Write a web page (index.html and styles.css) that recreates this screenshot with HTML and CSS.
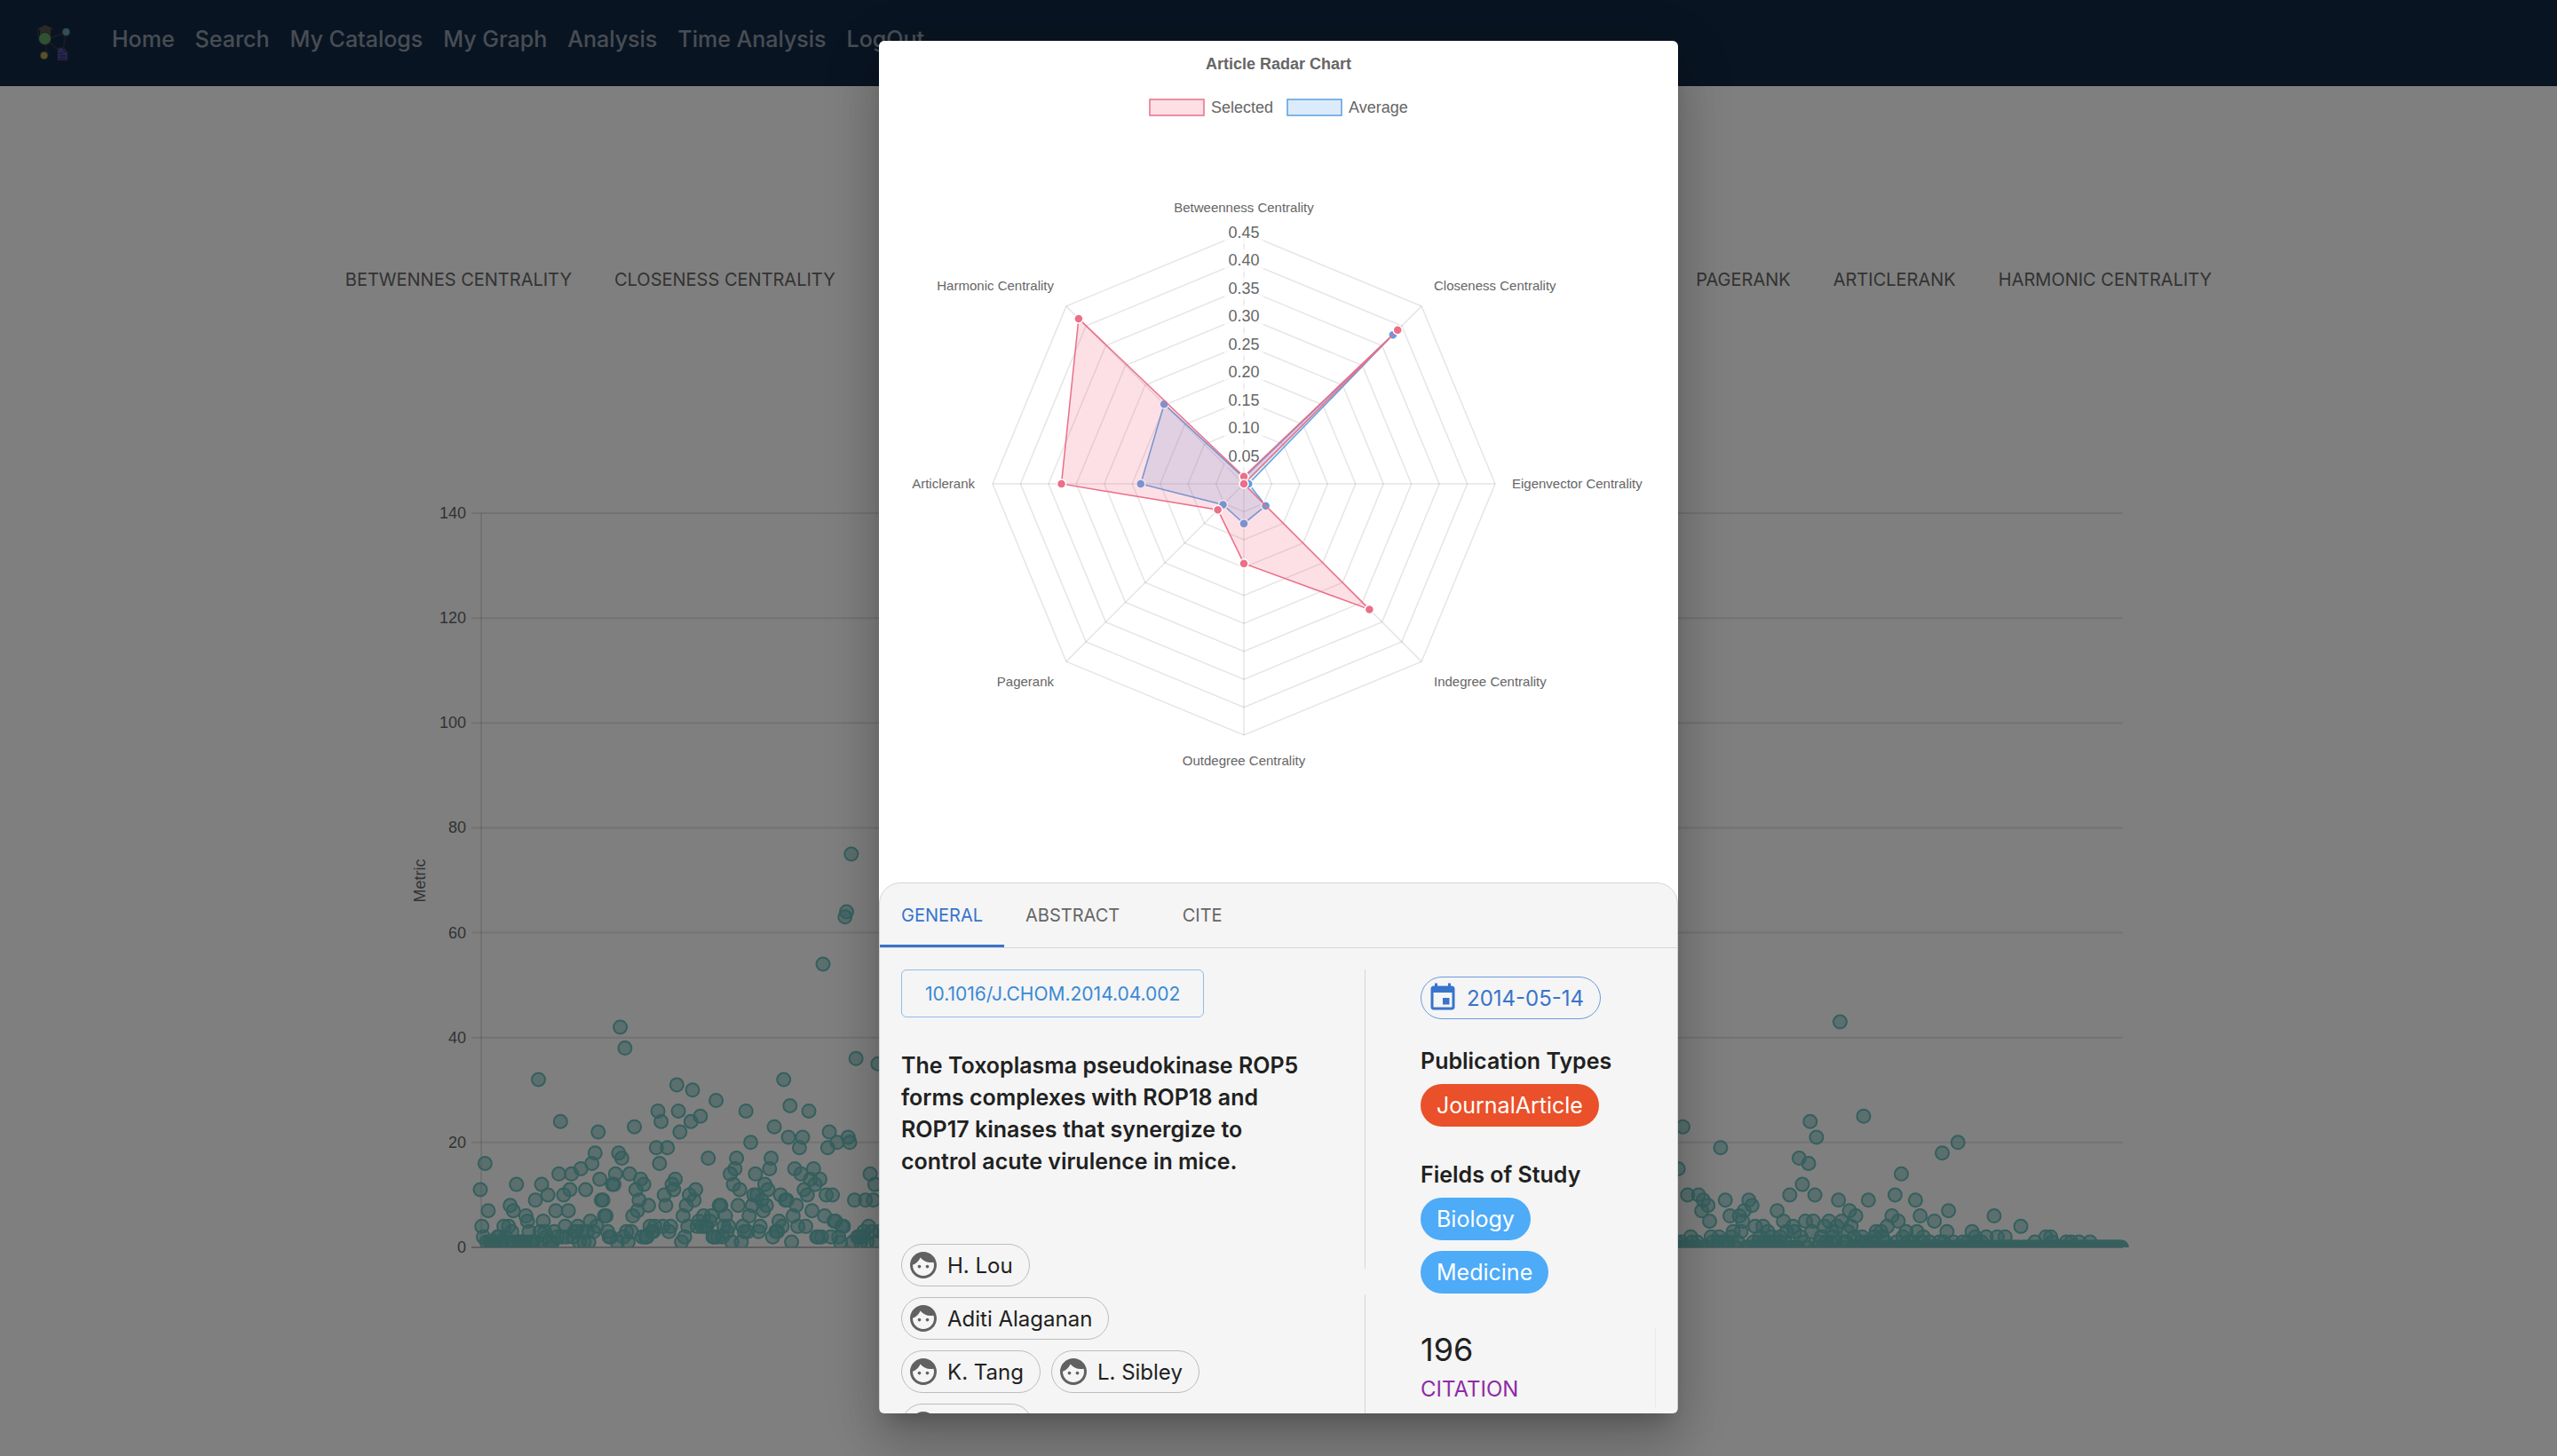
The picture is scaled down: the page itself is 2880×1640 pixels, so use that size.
FILE: index.html
```html
<!DOCTYPE html>
<html lang="en">
<head>
<meta charset="utf-8">
<meta name="viewport" content="width=device-width, initial-scale=1">
<title>Analysis</title>
<link rel="stylesheet" href="styles.css">
</head>
<body>
<header class="navbar">
  <a class="logo" href="#" aria-label="Home page">
    <svg viewBox="0 0 40 42" width="40" height="42">
      <g stroke="#3a3a3a" stroke-width="1.4" fill="none">
        <path d="M12 16 34 9M12 16V35M12 16 30 32M34 9 31 30M3 5V13"/>
      </g>
      <path d="M2 4.500 11 0 20 4.500 11 8Z" fill="#56524f"/>
      <path d="M5 6h12v6H5z" fill="#56524f"/>
      <circle cx="10.500" cy="15.500" r="7" fill="#5fa466" stroke="#3a3a3a"/>
      <circle cx="34.500" cy="8" r="4.500" fill="#659eae" stroke="#3a3a3a"/>
      <circle cx="9.700" cy="34.500" r="4.500" fill="#aba355" stroke="#3a3a3a"/>
      <path d="M25 26h7l4 4v10H25z" fill="#4f4fa8" stroke="#3a3a3a"/>
      <path d="M32 26v4h4M27 32h4M27 35h7M27 38h7" stroke="#25254f" fill="none"/>
    </svg>
  </a>
  <nav class="nav-links">
    <a href="#">Home</a><a href="#">Search</a><a href="#">My Catalogs</a><a href="#">My Graph</a><a href="#">Analysis</a><a href="#">Time Analysis</a><a href="#">LogOut</a>
  </nav>
</header>

<main class="page">
  <div class="metric-tabs">
    <div class="metric-group">
      <button>BETWENNES CENTRALITY</button>
      <button>CLOSENESS CENTRALITY</button>
    </div>
    <div class="metric-group">
      <button>PAGERANK</button>
      <button>ARTICLERANK</button>
      <button>HARMONIC CENTRALITY</button>
    </div>
  </div>
  <svg class="scatter" id="scatter" viewBox="0 0 1960 880" role="img" aria-label="Metric by article"></svg>
</main>

<div class="backdrop">
  <section class="dialog" role="dialog" aria-modal="true" aria-label="Article Radar Chart">
    <svg class="radar" id="radar" viewBox="0 0 900 900"></svg>
    <div class="card">
      <div class="tabs" role="tablist">
        <button class="tab tab-active" role="tab" aria-selected="true">GENERAL</button>
        <button class="tab" role="tab">ABSTRACT</button>
        <button class="tab" role="tab">CITE</button>
      </div>
      <div class="details">
        <div class="main-col">
          <a class="doi" href="#">10.1016/J.CHOM.2014.04.002</a>
          <h2 class="title">The Toxoplasma pseudokinase ROP5 forms complexes with ROP18 and ROP17 kinases that synergize to control acute virulence in mice.</h2>
          <ul class="authors">
            <li class="row"><span class="chip"><svg class="icon" viewBox="0 0 24 24"><use href="#face"/></svg>H. Lou</span></li>
            <li class="row"><span class="chip"><svg class="icon" viewBox="0 0 24 24"><use href="#face"/></svg>Aditi Alaganan</span></li>
            <li class="row"><span class="chip"><svg class="icon" viewBox="0 0 24 24"><use href="#face"/></svg>K. Tang</span><span class="chip"><svg class="icon" viewBox="0 0 24 24"><use href="#face"/></svg>L. Sibley</span></li>
            <li class="row"><span class="chip chip-rest"><svg class="icon" viewBox="0 0 24 24"><use href="#face"/></svg></span></li>
          </ul>
        </div>
        <div class="dividers"><span class="divider divider-top"></span><span class="divider divider-rest"></span></div>
        <div class="side-col">
          <span class="chip chip-date"><svg class="icon" viewBox="0 0 24 24"><path fill="currentColor" d="M17 12h-5v5h5v-5zM16 1v2H8V1H6v2H5c-1.110 0-1.990.9-1.990 2L3 19c0 1.100.89 2 2 2h14c1.100 0 2-.9 2-2V5c0-1.100-.9-2-2-2h-1V1h-2zm3 18H5V8h14v11z"/></svg>2014-05-14</span>
          <h3 class="subhead">Publication Types</h3>
          <span class="chip chip-type">JournalArticle</span>
          <h3 class="subhead subhead-fields">Fields of Study</h3>
          <div class="fields"><span class="chip chip-field">Biology</span><span class="chip chip-field">Medicine</span></div>
          <div class="stat"><span class="stat-value">196</span><span class="stat-label">CITATION</span></div>
        </div>
      </div>
    </div>
  </section>
</div>

<svg class="sprite" width="0" height="0" aria-hidden="true">
  <symbol id="face" viewBox="0 0 24 24"><path fill="#616161" d="M10.250 13c0 .69-.56 1.250-1.250 1.250S7.750 13.690 7.750 13s.56-1.250 1.250-1.250 1.250.56 1.250 1.250zM15 11.750c-.69 0-1.250.56-1.250 1.250s.56 1.250 1.250 1.250 1.250-.56 1.250-1.250-.56-1.250-1.250-1.250zm7 .25c0 5.520-4.480 10-10 10S2 17.520 2 12 6.480 2 12 2s10 4.480 10 10zM20 12c0-.78-.12-1.530-.33-2.240-.7.150-1.420.24-2.170.24-3.130 0-5.920-1.440-7.760-3.690C8.690 8.870 6.600 10.880 4 11.860c.01.040 0 .09 0 .14 0 4.410 3.590 8 8 8s8-3.590 8-8z"/></symbol>
</svg>
<script src="charts.js"></script>
</body>
</html>
```
FILE: styles.css
```css
* { box-sizing: border-box; }
body {
  margin: 0;
  background: #fff;
  color: #212121;
  font-family: Inter, "Open Sans", sans-serif;
  min-height: 100vh;
  overflow: hidden;
}
button { font: inherit; border: 0; background: none; cursor: pointer; padding: 0; }
a { text-decoration: none; color: inherit; }
h2, h3, ul { margin: 0; padding: 0; }
.sprite { position: absolute; }

.navbar {
  display: flex;
  align-items: flex-start;
  gap: 46px;
  height: 97px;
  padding: 28px 40px;
  background: #122844;
}
.logo { display: flex; }
.nav-links {
  display: flex;
  gap: 23px;
  color: rgba(255, 255, 255, .55);
  font-size: 25px;
  line-height: 32px;
  font-weight: 500;
}

.page { display: flex; flex-direction: column; align-items: center; }
.metric-tabs {
  display: flex;
  justify-content: space-between;
  width: 73%;
  margin: 182px 0 208px;
  color: #666;
  font-size: 20px;
  line-height: 73px;
}
.metric-group { display: flex; gap: 48px; }
.metric-tabs button { color: inherit; white-space: nowrap; }
.scatter { width: 100%; max-width: 1960px; }
svg text { font-family: "Liberation Sans", Arial, sans-serif; fill: #666; }
.axis-text { font-size: 18px; }
.grid-line { stroke: rgba(0, 0, 0, .1); stroke-width: 2; fill: none; }
.base-line { stroke: rgba(0, 0, 0, .25); stroke-width: 2; }
.dot { fill: rgba(106, 190, 187, .5); stroke: #6abfbb; stroke-width: 2; }

.backdrop {
  position: fixed;
  inset: 0;
  display: flex;
  justify-content: center;
  align-items: flex-start;
  padding: 46px 48px 48px;
  background: rgba(0, 0, 0, .5);
}
.dialog {
  width: 100%;
  max-width: 900px;
  max-height: 100%;
  overflow-y: auto;
  scrollbar-width: none;
  background: #fff;
  border-radius: 6px;
  box-shadow: 0 16px 22px -10px rgba(0, 0, 0, .2), 0 36px 57px 4px rgba(0, 0, 0, .14), 0 14px 69px 12px rgba(0, 0, 0, .12);
}
.radar { display: block; width: 100%; margin-bottom: 48px; }
.legend-text, .tick-text { font-size: 18px; }
.chart-title { font-size: 18px; font-weight: 700; }
.point-text { font-size: 15px; }
.tick-box { fill: rgba(255, 255, 255, .75); }
.web { stroke: rgba(0, 0, 0, .1); stroke-width: 1.5; fill: none; }
.selected { fill: rgba(240, 100, 130, .2); stroke: #ec6e87; stroke-width: 1.5; }
.average { fill: rgba(80, 155, 228, .2); stroke: #5b9fe3; stroke-width: 1.5; }
.selected-point { fill: #ec6e87; stroke: #fff; stroke-width: 1.5; }
.average-point { fill: #5b9fe3; stroke: #fff; stroke-width: 1.5; }

.card {
  border: 1px solid #d6d6d6;
  border-radius: 24px 24px 0 0;
  background: #f5f5f5;
  overflow: hidden;
}
.tabs { display: flex; height: 73px; border-bottom: 1px solid #d6d6d6; }
.tab {
  min-width: 138px;
  padding: 3px 24px 0;
  color: #666;
  font-size: 20px;
  border-bottom: 3px solid transparent;
}
.tab-active { color: #3874cb; border-bottom-color: #3874cb; }

.details { display: flex; padding: 24px 0 0 24px; }
.main-col { flex: 0 0 522px; min-width: 0; padding-bottom: 24px; }
.doi {
  display: inline-flex;
  align-items: center;
  height: 54px;
  padding: 0 26px;
  border: 1px solid #90bce8;
  border-radius: 6px;
  color: #3a8ad4;
  font-size: 21px;
}
.title {
  max-width: 468px;
  margin: 36px 0 75px;
  font-size: 25px;
  line-height: 36px;
  font-weight: 600;
}
.authors { display: grid; gap: 12px; list-style: none; }
.row { display: flex; gap: 12px; }
.chip {
  display: inline-flex;
  align-items: center;
  height: 48px;
  padding: 0 18px 0 6px;
  border: 1px solid #bdbdbd;
  border-radius: 24px;
  font-size: 24px;
  white-space: nowrap;
}
.icon { width: 36px; height: 36px; margin-right: 9px; flex: none; }
.chip-rest { width: 148px; }
.dividers { display: flex; flex-direction: column; gap: 29px; }
.divider { width: 1px; background: #d6d6d6; }
.divider-top { height: 337px; }
.divider-rest { flex: 1; }
.side-col {
  flex: 1;
  display: flex;
  flex-direction: column;
  align-items: flex-start;
  padding: 8px 24px 8px 62px;
}
.chip-date { color: #3874cb; border-color: #6c9bdc; }
.subhead { margin: 29px 0 8px; font-size: 25px; line-height: 36px; font-weight: 600; }
.subhead-fields { margin-top: 36px; }
.chip-type, .chip-field { padding: 0 18px; border: 0; color: #fff; font-size: 25px; }
.chip-type { background: #ea5029; }
.chip-field { background: #4dabf8; }
.fields { display: flex; flex-direction: column; align-items: flex-start; gap: 12px; }
.stat {
  align-self: stretch;
  display: flex;
  flex-direction: column;
  margin-top: 38px;
  border-right: 1px solid #e9e9e9;
}
.stat-value { font-size: 36px; line-height: 50px; }
.stat-label { color: #8e2ba6; font-size: 24px; line-height: 40px; }
```
FILE: charts.js
```js
const NS = 'http://www.w3.org/2000/svg';
function add(parent, tag, attrs, text) {
  const el = document.createElementNS(NS, tag);
  for (const key in attrs) el.setAttribute(key, attrs[key]);
  if (text !== undefined) el.textContent = text;
  parent.appendChild(el);
  return el;
}

/* Scatter: one value per article, in catalog order */
const head = [11,4,2,16,1,7,1,1,1,1,1,2,2,1,1,4,2,1,4,8,3,7,1,12,1,1,1,1,1,6,5,3,1,1,1,9,1,32,3,12,5,3,2,10,1,0,1,3,7,2,14,24,2,10,4,2,7,11,14,2,3,3,4,1,15,3,1,11,3,1,
5,16,3,18,4,22,13,9,9,6,6,3,2,2,12,12,14,1,18,42,17,2,38,3,1,14,3,6,23,11,7,9,13,2,12,2,2,8,4,3,3,4,19,26,16,24,4,10,8,19,3,4,12,11,13,31,26,22,1,6,2,8,4,10,24,30,9,11,4,5,25,4,6,4,4,17,5,6,2,2,28,2,8,8,2,4,6,3,4,14,1,12,15,17,8,11,1,4,3,26,3,6,20,8,10,14,10,3,4,9,7,12,8,11,15,17,2,23,3,3,5,10,4,32,9,9,21,27,1,6,15,8,4,19,14,21,11,4,10,26,13,7,15,12,2,2,13,2,54,6,10,19,22,2,10,5,5,20,2,1,4,4,63,64,21,20,75,1,9,36,2,2,1,2,3,9,1,4,14,3,9,12,1,35,3];
const peaks = {762:15,765:23,768:10,775:10,777:7,778:9,781:8,782:5,789:19,792:9,795:6,797:3,801:6,802:3,803:5,804:7,807:9,809:8,811:4,816:4,819:3,825:7,829:5,831:3,833:10,835:4,836:3,839:17,841:12,843:5,845:16,846:24,847:3,848:5,849:10,850:21,855:4,858:5,860:3,863:4,864:9,865:43,866:5,870:3,871:7,872:4,875:6,880:25,883:9,888:3,891:3,895:4,898:6,900:10,902:5,904:14,907:3,913:9,914:3,916:6,925:5,930:18,933:3,934:7,940:20,949:3,951:2,958:2,963:6,965:2,970:2,980:4,989:1,996:2,999:2,1000:1,1009:1,1012:1,1017:1,1024:1};
const lowCycle = [0,1,0,2,1,0,0,1,2,0,1,1,0];

const scatter = document.getElementById('scatter');
const x0 = 81, y0 = 845, stepX = 1.7705, stepY = 5.907;
for (let v = 0; v <= 140; v += 20) {
  const y = y0 - v * stepY;
  add(scatter, 'line', { x1: 71, x2: 1931, y1: y, y2: y, class: v ? 'grid-line' : 'base-line' });
  add(scatter, 'text', { x: 65, y: y + 6, 'text-anchor': 'end', class: 'axis-text' }, v);
}
add(scatter, 'line', { x1: 82, x2: 82, y1: y0 - 140 * stepY, y2: y0, class: 'grid-line' });
add(scatter, 'text', { transform: 'translate(19 432) rotate(-90)', 'text-anchor': 'middle', class: 'axis-text' }, 'Metric');
const clip = add(add(scatter, 'defs', {}), 'clipPath', { id: 'plot' });
add(clip, 'rect', { x: 0, y: 0, width: 1960, height: y0 });
const dots = add(scatter, 'g', { 'clip-path': 'url(#plot)' });
function dot(i, v) { add(dots, 'circle', { cx: x0 + i * stepX, cy: y0 - v * stepY, r: 7.5, class: 'dot' }); }
head.forEach((v, i) => dot(i, v));
for (let i = 755; i <= 1044; i++) {
  let v = peaks[i];
  if (v === undefined) v = i < 920 ? lowCycle[i % 13] : i < 960 ? i % 3 % 2 : 0;
  dot(i, v);
}

/* Radar */
const radar = document.getElementById('radar');
const cx = 411, cy = 499, radius = 283, max = 0.45;
const at = (k, v) => {
  const a = k * Math.PI / 4, r = v / max * radius;
  return [cx + r * Math.sin(a), cy - r * Math.cos(a)];
};
const ring = values => values.map((v, k) => at(k, v).map(n => n.toFixed(1)).join(',')).join(' ');
add(radar, 'text', { x: 450, y: 32, 'text-anchor': 'middle', class: 'chart-title' }, 'Article Radar Chart');
add(radar, 'rect', { x: 305, y: 66, width: 61, height: 18, class: 'selected' });
add(radar, 'text', { x: 374, y: 81, class: 'legend-text' }, 'Selected');
add(radar, 'rect', { x: 460, y: 66, width: 61, height: 18, class: 'average' });
add(radar, 'text', { x: 529, y: 81, class: 'legend-text' }, 'Average');
for (let n = 1; n <= 9; n++) add(radar, 'polygon', { points: ring(Array(8).fill(n * 0.05)), class: 'web' });
for (let k = 0; k < 8; k++) {
  const [x, y] = at(k, max);
  add(radar, 'line', { x1: cx, y1: cy, x2: x, y2: y, class: 'web' });
}
for (let n = 1; n <= 9; n++) {
  const y = cy - n * radius / 9;
  add(radar, 'rect', { x: cx - 22, y: y - 13, width: 44, height: 26, class: 'tick-box' });
  add(radar, 'text', { x: cx, y: y + 6, 'text-anchor': 'middle', class: 'tick-text' }, (n * 0.05).toFixed(2));
}
[['Betweenness Centrality', 411, 193, 'middle'], ['Closeness Centrality', 625, 281, 'start'],
 ['Eigenvector Centrality', 713, 504, 'start'], ['Indegree Centrality', 625, 727, 'start'],
 ['Outdegree Centrality', 411, 816, 'middle'], ['Pagerank', 197, 727, 'end'],
 ['Articlerank', 108, 504, 'end'], ['Harmonic Centrality', 197, 281, 'end']
].forEach(([label, x, y, anchor]) => add(radar, 'text', { x, y, 'text-anchor': anchor, class: 'point-text' }, label));
[['average', [0.011, 0.3775, 0.0085, 0.0555, 0.0711, 0.0529, 0.1848, 0.202]],
 ['selected', [0.013, 0.3895, 0, 0.318, 0.1427, 0.066, 0.3267, 0.4185]]
].forEach(([name, values]) => {
  add(radar, 'polygon', { points: ring(values), class: name });
  values.forEach((v, k) => {
    const [x, y] = at(k, v);
    add(radar, 'circle', { cx: x, cy: y, r: 5, class: name + '-point' });
  });
});
```
